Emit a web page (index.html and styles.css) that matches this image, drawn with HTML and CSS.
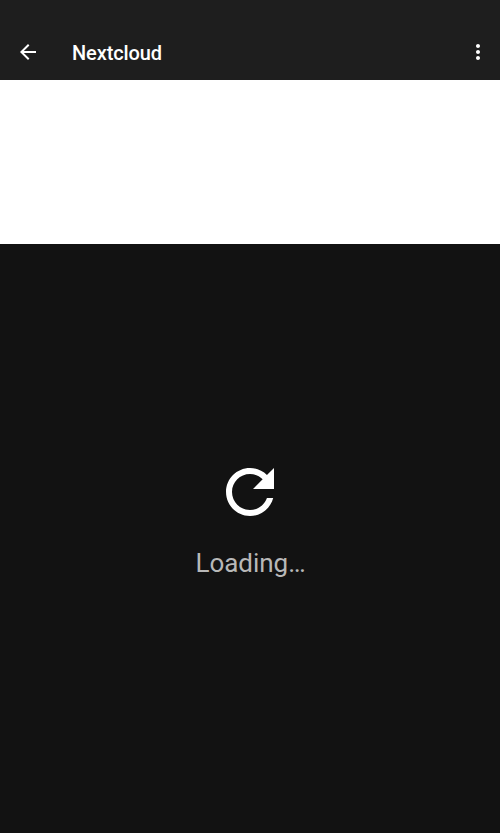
FILE: index.html
```html
<!DOCTYPE html>
<html lang="en">
<head>
<meta charset="utf-8">
<title>Nextcloud</title>
<link rel="stylesheet" href="styles.css">
</head>
<body>
<header class="app-bar">
  <svg class="icon" viewBox="0 0 24 24"><path d="M20 11H7.83l5.59-5.59L12 4l-8 8 8 8 1.41-1.41L7.83 13H20v-2z"/></svg>
  <h1 class="title">Nextcloud</h1>
  <svg class="icon" viewBox="0 0 24 24"><path d="M12 8c1.1 0 2-.9 2-2s-.9-2-2-2-2 .9-2 2 .9 2 2 2zm0 2c-1.1 0-2 .9-2 2s.9 2 2 2 2-.9 2-2-.9-2-2-2zm0 6c-1.1 0-2 .9-2 2s.9 2 2 2 2-.9 2-2-.9-2-2-2z"/></svg>
</header>
<div class="banner"></div>
<main class="content">
  <svg class="refresh" viewBox="0 0 24 24"><path d="M17.65 6.35C16.2 4.9 14.21 4 12 4c-4.42 0-7.99 3.58-7.99 8s3.57 8 7.99 8c3.73 0 6.84-2.55 7.73-6h-2.08c-.82 2.33-3.04 4-5.65 4-3.31 0-6-2.69-6-6s2.69-6 6-6c1.66 0 3.14.69 4.22 1.78L13 11h7V4l-2.35 2.35z"/></svg>
  <p class="message">Loading…</p>
</main>
</body>
</html>
```
FILE: styles.css
```css
* {
  box-sizing: border-box;
}

body {
  margin: 0;
  height: 833px;
  display: flex;
  flex-direction: column;
  overflow: hidden;
  background: #121212;
  color: #fff;
  font-family: Roboto, sans-serif;
}

.app-bar {
  height: 80px;
  padding: 24px 10px 0 16px;
  display: flex;
  align-items: center;
  background: #1e1e1e;
}

.icon {
  width: 24px;
  height: 24px;
  fill: #fff;
}

.title {
  flex: 1;
  margin: 2px 0 0 32px;
  font-size: 20px;
  line-height: 24px;
  font-weight: 500;
  letter-spacing: -0.1px;
}

.banner {
  height: 164px;
  background: #fff;
}

.content {
  flex: 1;
  padding-top: 212px;
  display: flex;
  flex-direction: column;
  align-items: center;
}

.refresh {
  width: 72px;
  height: 72px;
  fill: #fff;
}

.message {
  margin: 20px 0 0;
  padding-left: 1px;
  font-size: 26px;
  line-height: 30px;
  letter-spacing: -0.03px;
  color: #b8b8b8;
}
```
